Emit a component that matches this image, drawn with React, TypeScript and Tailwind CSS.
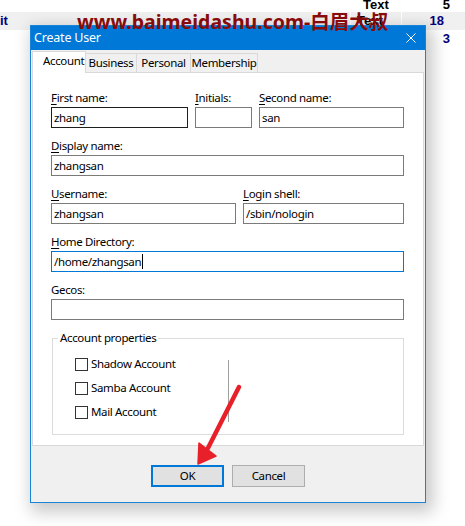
import React from 'react';

const ui = "font-['Segoe_UI','Noto_Sans',sans-serif]";

const Label: React.FC<{ text: string; accel?: boolean }> = ({ text, accel = true }) => (
    <div className="h-[16px] leading-[16px] text-[11.5px] tracking-[-0.35px] text-black mb-[1px] whitespace-nowrap">
        {accel ? (
            <>
                <span className="underline underline-offset-[2px]">{text[0]}</span>
                {text.slice(1)}
            </>
        ) : (
            text
        )}
    </div>
);

const Field: React.FC<{ value?: string; tone?: 'normal' | 'dark' | 'focus'; caret?: boolean }> = ({ value = '', tone = 'normal', caret }) => {
    const border =
        tone === 'dark' ? 'border-[#1e1e1e]' : tone === 'focus' ? 'border-[#0078d7]' : 'border-[#7a7a7a]';
    return (
        <div className={`h-[21px] bg-white border ${border} flex items-center pl-[2px] text-[11.5px] tracking-[-0.35px] text-black`}>
            <span>{value}</span>
            {caret && <span className="inline-block w-[1px] h-[15px] bg-black ml-[1px]" />}
        </div>
    );
};

const CheckRow: React.FC<{ label: string }> = ({ label }) => (
    <div className="h-[24px] flex items-center gap-[3px]">
        <div className="w-[13px] h-[13px] border border-[#333333] bg-white" />
        <span className="text-[11.5px] tracking-[-0.35px] text-black">{label}</span>
    </div>
);

const tabs = ['Business', 'Personal', 'Membership'];
const tabWidths = ['w-[51px]', 'w-[54px]', 'w-[67px]'];

export default function App() {
    return (
        <div className={`relative w-[465px] h-[526px] bg-white overflow-hidden ${ui}`}>
            {/* background list rows */}
            <div className="font-['Liberation_Sans',Arial,sans-serif] font-bold text-[13px]">
                <div className="h-[12px] flex items-end overflow-hidden">
                    <div className="w-[357px]" />
                    <div className="w-[50px] pl-[6px] leading-[15px] text-black">Text</div>
                    <div className="w-[43px] text-right leading-[15px] text-black">5</div>
                </div>
                <div className="h-[18px] flex items-center bg-[#f0f0f0]">
                    <div className="w-[356px] text-[#000080] -ml-[6px]">
                        <span className="pl-[6px]">it</span>
                    </div>
                    <div className="w-[51px] h-full pl-[6px] flex items-center border-l border-white text-black">Text</div>
                    <div className="w-[43px] h-full text-right flex items-center justify-end border-l border-white text-[#000080]">18</div>
                </div>
                <div className="h-[17px] flex items-center">
                    <div className="w-[407px]" />
                    <div className="w-[43px] text-right text-[#000080]">3</div>
                </div>
            </div>

            {/* watermark */}
            <div className="absolute left-[77px] top-[8px] z-20 text-[19.5px] font-bold leading-[28px] text-[#870b0b] font-['Noto_Sans','Noto_Sans_CJK_SC',sans-serif] whitespace-nowrap">
                www.baimeidashu.com-白眉大叔
            </div>

            {/* dialog window */}
            <div className="absolute left-[30px] top-[25px] w-[396px] border border-[#1883d7] bg-[#f0f0f0] shadow-[4px_6px_16px_3px_rgba(0,0,0,0.22)] z-10">
                <div className="h-[24px] bg-[#0078d7] flex items-center justify-between">
                    <span className="pl-[3px] text-[12.5px] tracking-[-0.2px] text-white">Create User</span>
                    <svg width="10" height="10" viewBox="0 0 10 10" className="mr-[9px]">
                        <path d="M0.5 0.5 L9.5 9.5 M9.5 0.5 L0.5 9.5" stroke="white" strokeWidth="1" />
                    </svg>
                </div>

                {/* tabs */}
                <div className="relative z-10 h-[23px] -mb-[1px] ml-[1px] flex items-end text-[11.5px] tracking-[-0.35px] text-black whitespace-nowrap">
                    <div className="h-[22px] w-[54px] bg-white border-l border-t border-r border-[#d9d9d9] pl-[10px] leading-[18px]">
                        Account
                    </div>
                    {tabs.map((t, i) => (
                        <div
                            key={t}
                            className={`h-[19px] mb-[1px] ${tabWidths[i]} bg-[#f0f0f0] border-t border-r border-[#d9d9d9] flex items-center justify-center`}
                        >
                            {t}
                        </div>
                    ))}
                </div>

                {/* panel */}
                <div className="mx-[1px] bg-white border border-[#d9d9d9] pt-[17px] pl-[18px] pr-[19px] pb-[10px]">
                    <div className="flex gap-[7px]">
                        <div className="w-[137px]">
                            <Label text="First name:" />
                            <Field value="zhang" tone="dark" />
                        </div>
                        <div className="w-[57px]">
                            <Label text="Initials:" />
                            <Field />
                        </div>
                        <div className="flex-1">
                            <Label text="Second name:" />
                            <Field value="san" />
                        </div>
                    </div>
                    <div className="mt-[10px]">
                        <Label text="Display name:" />
                        <Field value="zhangsan" />
                    </div>
                    <div className="mt-[10px] flex gap-[7px]">
                        <div className="w-[185px]">
                            <Label text="Username:" />
                            <Field value="zhangsan" />
                        </div>
                        <div className="flex-1">
                            <Label text="Login shell:" />
                            <Field value="/sbin/nologin" />
                        </div>
                    </div>
                    <div className="mt-[10px]">
                        <Label text="Home Directory:" />
                        <Field value="/home/zhangsan" tone="focus" caret />
                    </div>
                    <div className="mt-[10px]">
                        <Label text="Gecos:" accel={false} />
                        <Field />
                    </div>

                    <fieldset className="mt-[10px] ml-[1px] border border-[#dcdcdc] pt-[6px] pb-[10px]">
                        <legend className="ml-[5px] px-[2px] h-[16px] leading-[16px] text-[11.5px] tracking-[-0.35px] text-black">
                            Account properties
                        </legend>
                        <div className="flex pl-[22px]">
                            <div className="w-[153px]">
                                <CheckRow label="Shadow Account" />
                                <CheckRow label="Samba Account" />
                                <CheckRow label="Mail Account" />
                            </div>
                            <div className="mt-[8px] w-[1px] h-[62px] bg-[#a0a0a0]" />
                        </div>
                    </fieldset>
                </div>

                {/* footer */}
                <div className="pt-[19px] pb-[15px] flex justify-center gap-[8px] text-[11.5px] tracking-[-0.35px] text-black">
                    <div className="w-[73px] h-[22px] bg-[#e1e1e1] border-2 border-[#0078d7] flex items-center justify-center">OK</div>
                    <div className="w-[73px] h-[22px] bg-[#e1e1e1] border border-[#adadad] flex items-center justify-center">Cancel</div>
                </div>
            </div>

            {/* red arrow annotation */}
            <svg className="absolute left-0 top-0 z-30 pointer-events-none" width="465" height="526" viewBox="0 0 465 526">
                <path d="M239 387 L208 448" stroke="#e8202a" strokeWidth="4.5" strokeLinecap="round" />
                <path d="M198 464 L199 443 L216 456 Z" fill="#e8202a" stroke="#e8202a" strokeWidth="1.5" strokeLinejoin="round" />
            </svg>
        </div>
    );
}
